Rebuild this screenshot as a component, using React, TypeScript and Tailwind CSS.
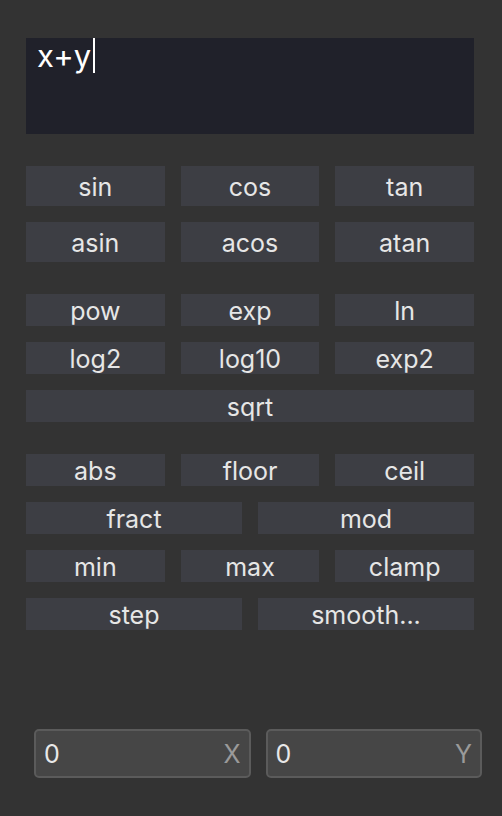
const groups: string[][][] = [
  [
    ["sin", "cos", "tan"],
    ["asin", "acos", "atan"],
  ],
  [
    ["pow", "exp", "ln"],
    ["log2", "log10", "exp2"],
    ["sqrt"],
  ],
  [
    ["abs", "floor", "ceil"],
    ["fract", "mod"],
    ["min", "max", "clamp"],
    ["step", "smooth..."],
  ],
];

function FnButton({ label, tall }: { label: string; tall: boolean }) {
  return (
    <button
      className={`${tall ? "h-10" : "h-8"} bg-[#3d3e44] text-[#e6e6e6] text-[25px] leading-none flex items-center justify-center pt-[2px]`}
    >
      {label}
    </button>
  );
}

function Row({ items, tall }: { items: string[]; tall: boolean }) {
  const cols = items.length === 3 ? "grid-cols-3" : items.length === 2 ? "grid-cols-2" : "grid-cols-1";
  return (
    <div className={`grid ${cols} gap-x-4`}>
      {items.map((it) => (
        <FnButton key={it} label={it} tall={tall} />
      ))}
    </div>
  );
}

function NumberField({ axis }: { axis: string }) {
  return (
    <div className="flex-1 h-[49px] rounded-[5px] border-2 border-[#5b5b5b] bg-[#464646] flex items-center justify-between pl-[8px] pr-[8px] pt-px">
      <span className="text-[25px] text-[#e8e8e8] leading-none">0</span>
      <span className="text-[25px] text-[#9a9a9a] leading-none">{axis}</span>
    </div>
  );
}

export default function App() {
  return (
    <div
      className="w-[502px] h-[816px] bg-[#333333] flex flex-col pt-[38px]"
      style={{ fontFamily: 'Inter, "Liberation Sans", Arial, sans-serif' }}
    >
      <div className="mx-[26px] w-[448px]">
        <div className="h-24 bg-[#20212a] pl-[11px]">
          <div className="flex items-start text-[31px] leading-[35px] text-white">
            <span>x+y</span>
            <span className="w-[2px] h-[35px] bg-white ml-[2px]" />
          </div>
        </div>

        <div className="flex flex-col gap-8 mt-8">
          {groups.map((g, gi) => (
            <div key={gi} className="flex flex-col gap-4">
              {g.map((r) => (
                <Row key={r.join()} items={r} tall={gi === 0} />
              ))}
            </div>
          ))}
        </div>
      </div>

      <div className="flex gap-[15px] pl-[34px] pr-[20px] mt-[99px]">
        <NumberField axis="X" />
        <NumberField axis="Y" />
      </div>
    </div>
  );
}
